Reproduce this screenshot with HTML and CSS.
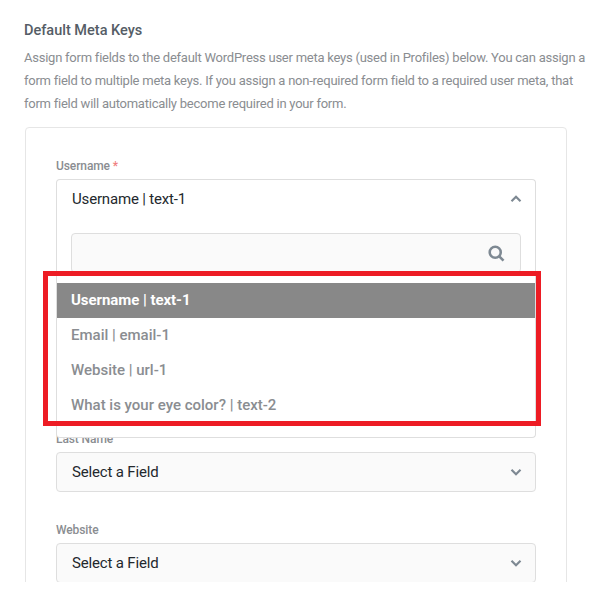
FILE: index.html
```html
<!DOCTYPE html>
<html>
<head>
  <meta charset="UTF-8">
  <link rel="stylesheet" href="styles.css">
</head>
<body>
  <div class="page">
    <h3 class="section-title">Default Meta Keys</h3>
    <p class="section-desc">Assign form fields to the default WordPress user meta keys (used in Profiles) below. You can assign a form field to multiple meta keys. If you assign a non-required form field to a required user meta, that form field will automatically become required in your form.</p>

    <div class="card">
      <div class="field field-open">
        <label class="field-label">Username <span class="required">*</span></label>
        <div class="select-wrap">
          <div class="select select-open">
            <span>Username | text-1</span>
            <svg class="chevron" viewBox="0 0 12 8"><path d="M1.5 6.2 6 1.8l4.5 4.4"/></svg>
          </div>
          <div class="dropdown">
            <div class="search-box">
              <svg class="search-icon" viewBox="0 0 16 16"><circle cx="6.8" cy="6.8" r="5.2"/><path d="M10.6 10.6 14.6 14.8"/></svg>
            </div>
            <div class="option option-active">Username | text-1</div>
            <div class="option">Email | email-1</div>
            <div class="option">Website | url-1</div>
            <div class="option">What is your eye color? | text-2</div>
          </div>
        </div>
      </div>

      <div class="field">
        <label class="field-label">Last Name</label>
        <div class="select">
          <span>Select a Field</span>
          <svg class="chevron" viewBox="0 0 12 8"><path d="M1.5 1.8 6 6.2l4.5-4.4"/></svg>
        </div>
      </div>

      <div class="field">
        <label class="field-label">Website</label>
        <div class="select">
          <span>Select a Field</span>
          <svg class="chevron" viewBox="0 0 12 8"><path d="M1.5 1.8 6 6.2l4.5-4.4"/></svg>
        </div>
      </div>
    </div>

    <!-- red annotation box -->
    <div class="highlight-box"></div>
  </div>
</body>
</html>
```

FILE: styles.css
```css
* {
  box-sizing: border-box;
}

body {
  margin: 0;
  background: #fff;
  font-family: Roboto, "Liberation Sans", sans-serif;
}

.page {
  position: relative;
  height: 582px;
  padding: 22px 24px 0;
  overflow: hidden;
}

.section-title {
  margin: 0;
  font-size: 14.5px;
  line-height: 18px;
  font-weight: 500;
  color: #555d66;
}

.section-desc {
  margin: 6px 0 0;
  font-size: 13px;
  line-height: 23px;
  letter-spacing: -0.24px;
  color: #8a8d91;
}

.card {
  width: 542px;
  margin: 12px 0 0 1px;
  padding: 29px 30px 0;
  border: 1px solid #e6e6e6;
  border-radius: 4px;
}

.field {
  height: 91px;
}

.field-open {
  height: 273px;
}

.field-label {
  display: block;
  height: 22px;
  font-size: 12px;
  line-height: 18px;
  letter-spacing: -0.1px;
  font-weight: 500;
  color: #8a8d91;
}

.required {
  color: #f08080;
}

.select-wrap {
  position: relative;
}

.select {
  display: flex;
  align-items: center;
  justify-content: space-between;
  height: 40px;
  padding: 0 13px 0 15px;
  border: 1px solid #dedede;
  border-radius: 4px;
  background: #fafafa;
  font-size: 15px;
  letter-spacing: -0.17px;
  color: #23282d;
}

.select-open {
  padding-bottom: 2px;
  background: #fff;
  border-bottom: none;
  border-radius: 4px 4px 0 0;
}

.chevron {
  width: 12px;
  height: 8px;
  fill: none;
  stroke: #7e8993;
  stroke-width: 2.2;
}

.dropdown {
  position: absolute;
  z-index: 2;
  top: 40px;
  left: 0;
  width: 100%;
  height: 219px;
  padding-top: 14px;
  border: 1px solid #dedede;
  border-top: none;
  border-radius: 0 0 4px 4px;
  background: #fff;
}

.search-box {
  display: flex;
  align-items: center;
  justify-content: flex-end;
  height: 40px;
  margin: 0 14px 10px;
  padding-right: 15px;
  border: 1px solid #dedede;
  border-radius: 4px;
  background: #fafafa;
}

.search-icon {
  width: 17px;
  height: 17px;
  fill: none;
  stroke: #7e8993;
  stroke-width: 2.4;
}

.option {
  height: 35px;
  padding-left: 14px;
  font-size: 15px;
  line-height: 35px;
  font-weight: 500;
  color: #8a8d91;
}

.option-active {
  background: #888;
  color: #fff;
  font-weight: 700;
  letter-spacing: -0.05px;
}

.highlight-box {
  position: absolute;
  z-index: 3;
  top: 271px;
  left: 43px;
  width: 498px;
  height: 155px;
  border: 5px solid #ed1c24;
}
```
